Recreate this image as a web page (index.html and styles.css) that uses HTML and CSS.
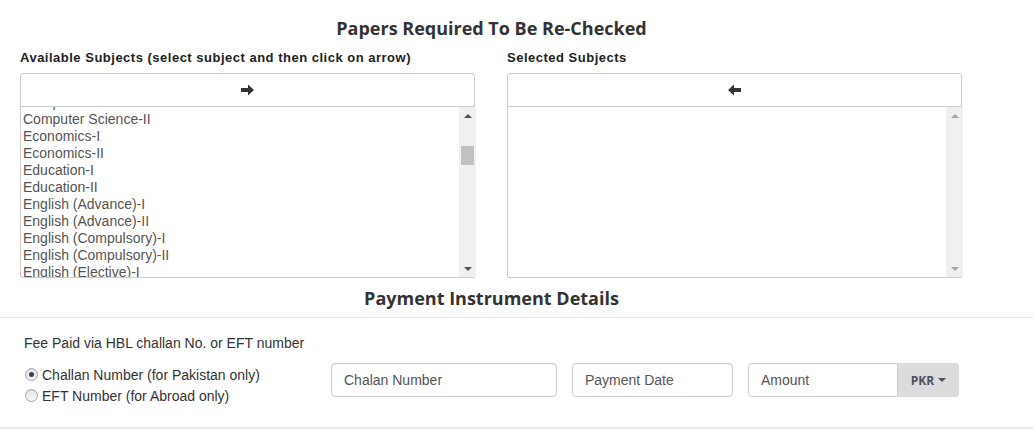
FILE: index.html
```html
<!DOCTYPE html>
<html lang="en">
<head>
<meta charset="utf-8">
<title>Re-Checking</title>
<link rel="stylesheet" href="styles.css">
</head>
<body>
<main class="page">
  <section class="subjects">
    <h1 class="section-title">Papers Required To Be Re-Checked</h1>
    <div class="picker">
      <div class="picker-col">
        <div class="picker-label">Available Subjects (select subject and then click on arrow)</div>
        <button class="move-btn" type="button" aria-label="Add">
          <svg width="13" height="12" viewBox="0 0 13 12"><path d="M0 4H7V0.5L13 6L7 11.5V8H0Z" fill="#333"/></svg>
        </button>
        <div class="listbox">
          <div class="list-view">
            <ul class="list list-scrolled">
              <li>Computer Science-I</li>
              <li>Computer Science-II</li>
              <li>Economics-I</li>
              <li>Economics-II</li>
              <li>Education-I</li>
              <li>Education-II</li>
              <li>English (Advance)-I</li>
              <li>English (Advance)-II</li>
              <li>English (Compulsory)-I</li>
              <li>English (Compulsory)-II</li>
              <li>English (Elective)-I</li>
              <li>English (Elective)-II</li>
            </ul>
          </div>
          <div class="scrollbar">
            <div class="sb-btn"><span class="tri-up"></span></div>
            <div class="sb-track"><div class="sb-thumb"></div></div>
            <div class="sb-btn"><span class="tri-down"></span></div>
          </div>
        </div>
      </div>
      <div class="picker-col">
        <div class="picker-label">Selected Subjects</div>
        <button class="move-btn" type="button" aria-label="Remove">
          <svg width="13" height="12" viewBox="0 0 13 12"><path d="M13 4H6V0.5L0 6L6 11.5V8H13Z" fill="#333"/></svg>
        </button>
        <div class="listbox">
          <div class="list-view">
            <ul class="list"></ul>
          </div>
          <div class="scrollbar disabled">
            <div class="sb-btn"><span class="tri-up"></span></div>
            <div class="sb-track"></div>
            <div class="sb-btn"><span class="tri-down"></span></div>
          </div>
        </div>
      </div>
    </div>
  </section>

  <h2 class="section-title payment-title">Payment Instrument Details</h2>
  <hr class="divider">

  <section class="payment">
    <p class="fee-text">Fee Paid via HBL challan No. or EFT number</p>
    <div class="payment-row">
      <div class="radios">
        <label class="radio"><span class="radio-dot checked"></span>Challan Number (for Pakistan only)</label>
        <label class="radio"><span class="radio-dot"></span>EFT Number (for Abroad only)</label>
      </div>
      <input class="field field-chalan" type="text" placeholder="Chalan Number">
      <input class="field field-date" type="text" placeholder="Payment Date">
      <div class="input-group">
        <input class="field field-amount" type="text" placeholder="Amount">
        <span class="addon">PKR <span class="caret"></span></span>
      </div>
    </div>
  </section>

  <div class="panel-edge"></div>
</main>
</body>
</html>
```

FILE: styles.css
```css
* { box-sizing: border-box; }

html, body {
  margin: 0;
  padding: 0;
  background: #fff;
}

body {
  font-family: "Liberation Sans", Arial, sans-serif;
  font-size: 14px;
  color: #333;
}

.page {
  width: 1033px;
  padding-top: 18px;
}

.subjects {
  margin-left: 20px;
  width: 943px;
}

.section-title {
  margin: 0;
  font-family: "Open Sans", "Noto Sans", sans-serif;
  font-weight: 700;
  font-size: 18px;
  line-height: 20px;
  color: #333;
  text-align: center;
}

.picker {
  display: grid;
  grid-template-columns: 456px 456px;
  column-gap: 31px;
  margin-top: 12px;
}

.picker-label {
  font-family: "Liberation Sans", Arial, sans-serif;
  font-weight: 700;
  font-size: 13px;
  letter-spacing: 0.5px;
  line-height: 16px;
  color: #222;
  white-space: nowrap;
}

.move-btn {
  display: flex;
  align-items: center;
  justify-content: center;
  width: 455px;
  height: 34px;
  margin-top: 7px;
  padding: 0;
  background: #fff;
  border: 1px solid #ccc;
  border-radius: 3px 3px 0 0;
}

.listbox {
  display: flex;
  width: 456px;
  height: 171px;
  border: 1px solid #ccc;
  border-top: none;
  border-right: none;
  border-radius: 0 0 3px 3px;
  overflow: hidden;
}

.list-view {
  flex: 1;
  overflow: hidden;
}

.list {
  list-style: none;
  margin: 0;
  padding: 0 0 0 2px;
  font-size: 14px;
  line-height: 17px;
  color: #555;
}

.list-scrolled {
  margin-top: -13px;
}

.list li {
  white-space: nowrap;
}

.scrollbar {
  display: flex;
  flex-direction: column;
  width: 17px;
  background: #f0f0f0;
}

.sb-btn {
  height: 17px;
  display: flex;
  align-items: center;
  justify-content: center;
}

.sb-track {
  flex: 1;
  padding: 0 2px;
}

.sb-thumb {
  margin-top: 22px;
  height: 19px;
  background: #c1c1c1;
}

.tri-up, .tri-down {
  width: 0;
  height: 0;
  border-left: 4px solid transparent;
  border-right: 4px solid transparent;
}

.tri-up { border-bottom: 4px solid #505050; }
.tri-down { border-top: 4px solid #505050; }

.scrollbar.disabled .tri-up { border-bottom-color: #a3a3a3; }
.scrollbar.disabled .tri-down { border-top-color: #a3a3a3; }

.payment-title {
  margin-top: 10px;
  margin-left: 20px;
  width: 943px;
  font-size: 18px;
}

.divider {
  margin: 9px 0 0;
  border: 0;
  border-top: 1px solid #e5e5e5;
  height: 0;
}

.payment {
  padding-left: 24px;
}

.fee-text {
  margin: 15px 0 0;
  font-size: 14px;
  line-height: 20px;
  color: #333;
}

.payment-row {
  display: flex;
  align-items: flex-start;
  margin-top: 10px;
}

.radios {
  width: 307px;
  display: flex;
  flex-direction: column;
  padding-top: 1px;
}

.radio {
  display: flex;
  align-items: center;
  height: 21px;
  font-size: 14px;
  color: #333;
}

.radio-dot {
  width: 13px;
  height: 13px;
  margin: 0 4px 0 1px;
  border-radius: 50%;
  border: 1px solid #a0a4ab;
  background: linear-gradient(#dfe2e6, #f7f8fa);
  display: flex;
  align-items: center;
  justify-content: center;
}

.radio-dot.checked::after {
  content: "";
  width: 5px;
  height: 5px;
  border-radius: 50%;
  background: #3b3f55;
}

.field {
  height: 34px;
  padding: 6px 12px;
  border: 1px solid #ccc;
  border-radius: 4px;
  font-family: "Liberation Sans", Arial, sans-serif;
  font-size: 14px;
  color: #555;
  background: #fff;
  box-shadow: inset 0 1px 1px rgba(0,0,0,0.05);
}

.field::placeholder {
  color: #555;
  opacity: 1;
}

.field-chalan { width: 226px; }

.field-date {
  width: 161px;
  margin-left: 15px;
}

.input-group {
  display: flex;
  margin-left: 15px;
}

.field-amount {
  width: 150px;
  border-radius: 4px 0 0 4px;
}

.addon {
  display: flex;
  align-items: center;
  justify-content: center;
  gap: 4px;
  width: 61px;
  height: 34px;
  background: #dcdcdc;
  border-radius: 0 4px 4px 0;
  font-family: "Open Sans", "Noto Sans", sans-serif;
  font-weight: 700;
  font-size: 12px;
  color: #4e5060;
}

.caret {
  width: 0;
  height: 0;
  border-left: 4px solid transparent;
  border-right: 4px solid transparent;
  border-top: 4px solid #4e5060;
}

.panel-edge {
  margin-top: 21px;
  height: 2px;
  background: #d9ebf4;
}
```
